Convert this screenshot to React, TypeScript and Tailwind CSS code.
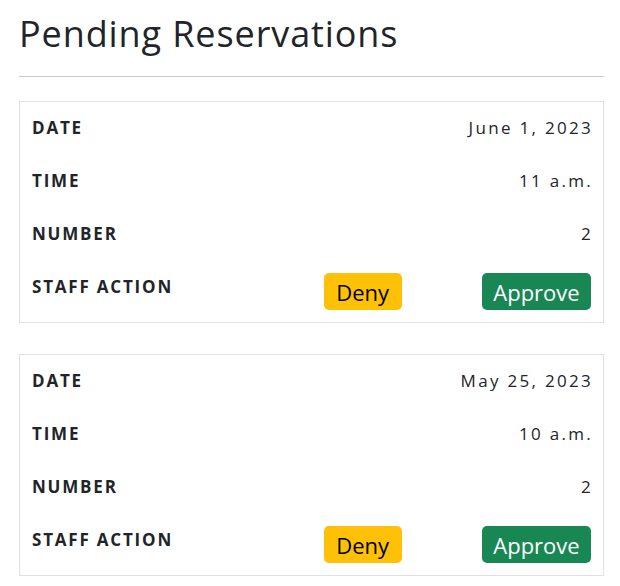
import React from "react";

type Res = { date: string; time: string; number: string };

const data: Res[] = [
  { date: "June 1, 2023", time: "11 a.m.", number: "2" },
  { date: "May 25, 2023", time: "10 a.m.", number: "2" },
];

function Row({ label, value }: { label: string; value: string }) {
  return (
    <div className="flex justify-between px-3 pt-3 pb-[13px] leading-[28px]">
      <span className="font-bold text-[17px] tracking-[1.8px] uppercase">{label}</span>
      <span className="font-normal text-[17px] tracking-[2.3px] mr-[-2px]">{value}</span>
    </div>
  );
}

function Card({ r }: { r: Res }) {
  return (
    <div className="border border-[#dee2e6]">
      <Row label="Date" value={r.date} />
      <Row label="Time" value={r.time} />
      <Row label="Number" value={r.number} />
      <div className="grid grid-cols-3 px-3 pt-3 pb-3">
        <span className="font-bold text-[17px] tracking-[1.8px] uppercase leading-[28px] whitespace-nowrap">
          Staff Action
        </span>
        <div className="flex justify-end pr-[3px]">
          <button className="h-[37px] w-[78px] rounded-[5px] bg-[#ffc107] text-black text-[22px] leading-none">
            Deny
          </button>
        </div>
        <div className="flex justify-end">
          <button className="h-[37px] w-[109px] rounded-[5px] bg-[#198754] text-white text-[22px] leading-none">
            Approve
          </button>
        </div>
      </div>
    </div>
  );
}

export default function App() {
  return (
    <div
      className="bg-white min-h-[586px] pl-[19px] pr-[16px] pt-[10px] text-[#212529]"
      style={{ fontFamily: '"Open Sans", "Noto Sans", sans-serif' }}
    >
      <h1 className="text-[36px] font-normal tracking-[0.9px] leading-[48px]">Pending Reservations</h1>
      <hr className="mt-[18px] border-0 border-t border-[#c8c9ca]" />
      <div className="mt-[24px] flex flex-col gap-[31px]">
        {data.map((r, i) => (
          <Card key={i} r={r} />
        ))}
      </div>
    </div>
  );
}
